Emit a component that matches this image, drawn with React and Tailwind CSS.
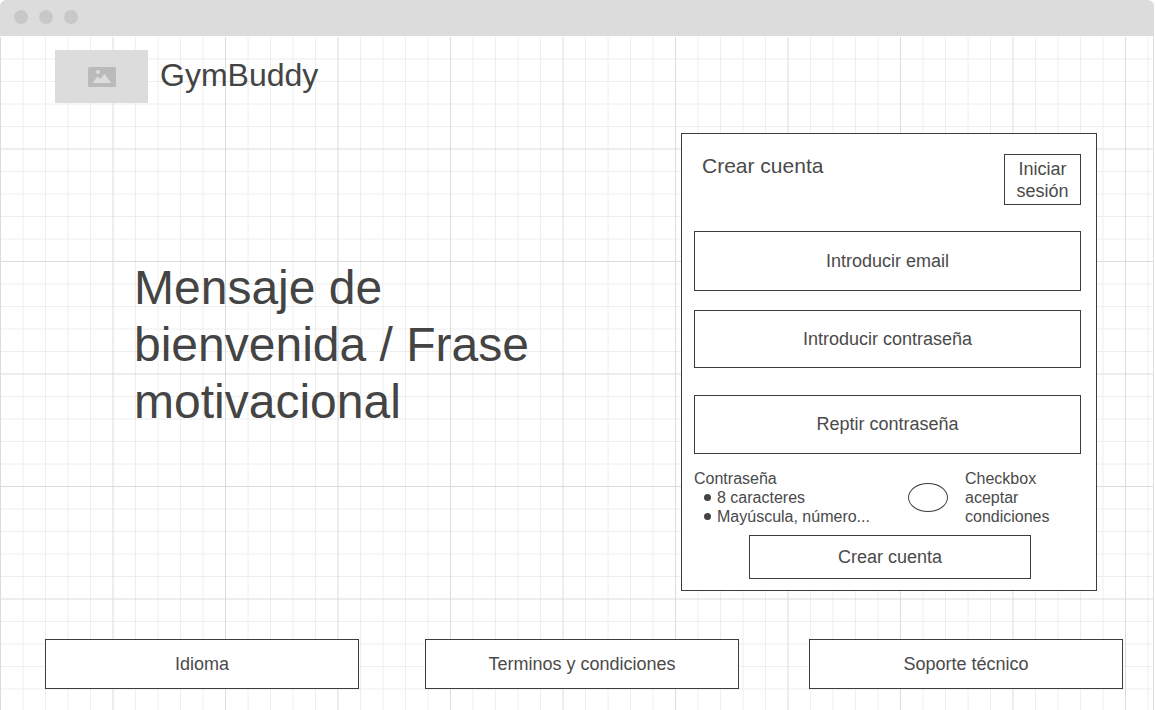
import React from "react";

const STEPS = [0, 1, 2, 3, 4, 5, 6, 7, 8, 9];
const MINOR = STEPS.filter((n) => n % 5 !== 0);
const MAJOR = STEPS.filter((n) => n % 5 === 0);
const toPath = (steps) =>
  steps
    .map((n) => 0.5 + n * 22.5)
    .map((p) => `M${p} 0V225M0 ${p}H225`)
    .join("");

function GridPaper() {
  return (
    <svg className="absolute inset-0 -z-10 h-full w-full" aria-hidden="true">
      <defs>
        <pattern id="grid" width="225" height="225" patternUnits="userSpaceOnUse">
          <path d={toPath(MINOR)} stroke="#eeeeee" fill="none" />
          <path d={toPath(MAJOR)} stroke="#dcdcdc" fill="none" />
        </pattern>
      </defs>
      <rect width="100%" height="100%" fill="url(#grid)" />
    </svg>
  );
}

function ImagePlaceholder() {
  return (
    <div className="flex h-[53px] w-[93px] items-center justify-center bg-[#dcdcdc]">
      <svg width="28" height="20" viewBox="0 0 28 20" role="img" aria-label="Logo">
        <rect width="28" height="20" rx="1.5" fill="#bababa" />
        <circle cx="10" cy="5" r="2" fill="#dcdcdc" />
        <path d="M4.5 16 9.5 9.5l2.7 2.6L16.5 7l6.8 9z" fill="#dcdcdc" />
      </svg>
    </div>
  );
}

function Field({ label, type, className }) {
  return (
    <input
      type={type}
      aria-label={label}
      placeholder={label}
      className={`w-full border border-[#3c3c3c] bg-white text-center text-[18px] placeholder:text-[#4a4a4a] placeholder:opacity-100 ${className}`}
    />
  );
}

function Requirement({ children }) {
  return (
    <li className="flex items-center gap-[6px] pl-[10px]">
      <span className="h-[7px] w-[7px] rounded-full bg-[#444444]" />
      {children}
    </li>
  );
}

function SignUpCard() {
  return (
    <form
      onSubmit={(e) => e.preventDefault()}
      className="w-[416px] border border-[#3c3c3c] bg-white pt-[20px] pr-[15px] pb-[11px] pl-[12px] text-[#4a4a4a]"
    >
      <div className="flex items-start justify-between pl-[8px]">
        <h2 className="text-[21px] leading-[24px]">Crear cuenta</h2>
        <button
          type="button"
          className="h-[51px] w-[77px] border border-[#3c3c3c] bg-white text-[18px] leading-[22px]"
        >
          Iniciar sesión
        </button>
      </div>
      <Field label="Introducir email" type="email" className="mt-[26px] h-[60px]" />
      <Field label="Introducir contraseña" type="password" className="mt-[19px] h-[58px]" />
      <Field label="Reptir contraseña" type="password" className="mt-[27px] h-[59px]" />
      <div className="mt-[15px] flex items-center justify-between text-[16px] leading-[19px]">
        <div>
          <p>Contraseña</p>
          <ul>
            <Requirement>8 caracteres</Requirement>
            <Requirement>Mayúscula, número...</Requirement>
          </ul>
        </div>
        <label className="flex w-[173px] items-center gap-[17px]">
          <input
            type="checkbox"
            className="h-[29px] w-[40px] shrink-0 appearance-none rounded-[50%] border border-[#3c3c3c] bg-white checked:bg-[#444444]"
          />
          <span className="w-[100px]">Checkbox aceptar condiciones</span>
        </label>
      </div>
      <button
        type="submit"
        className="mt-[9px] ml-[55px] block h-[44px] w-[282px] border border-[#3c3c3c] bg-white text-[18px]"
      >
        Crear cuenta
      </button>
    </form>
  );
}

function FooterButton({ children, className = "" }) {
  return (
    <button
      type="button"
      className={`h-[50px] w-[314px] border border-[#3c3c3c] bg-white text-[18px] text-[#4a4a4a] ${className}`}
    >
      {children}
    </button>
  );
}

export default function App() {
  return (
    <div className="flex min-h-screen flex-col bg-white pr-px font-['Liberation_Sans',Arial,sans-serif] text-[#444444]">
      <div className="flex h-[36px] items-center gap-[11px] rounded-t-[6px] bg-[#dcdcdc] pb-[2px] pl-[14px]">
        <span className="h-[14px] w-[14px] rounded-full bg-[#c8c8c8]" />
        <span className="h-[14px] w-[14px] rounded-full bg-[#c8c8c8]" />
        <span className="h-[14px] w-[14px] rounded-full bg-[#c8c8c8]" />
      </div>
      <div className="relative isolate flex grow flex-col border-r border-[#dfdfdf] pb-[21px]">
        <GridPaper />
        <div className="h-px bg-white" />
        <header className="flex items-start gap-[12px] pt-[13px] pl-[55px]">
          <ImagePlaceholder />
          <span className="text-[32px] leading-[50px]">GymBuddy</span>
        </header>
        <main className="flex items-start justify-between pt-[30px] pr-[56px] pl-[134px]">
          <h1 className="mt-[126px] w-[420px] text-[48px] leading-[57px]">
            Mensaje de bienvenida / Frase motivacional
          </h1>
          <SignUpCard />
        </main>
        <footer className="mt-[48px] flex gap-[66px] pr-[30px] pl-[45px]">
          <FooterButton>Idioma</FooterButton>
          <FooterButton>Terminos y condiciones</FooterButton>
          <FooterButton className="ml-auto">Soporte técnico</FooterButton>
        </footer>
      </div>
    </div>
  );
}
